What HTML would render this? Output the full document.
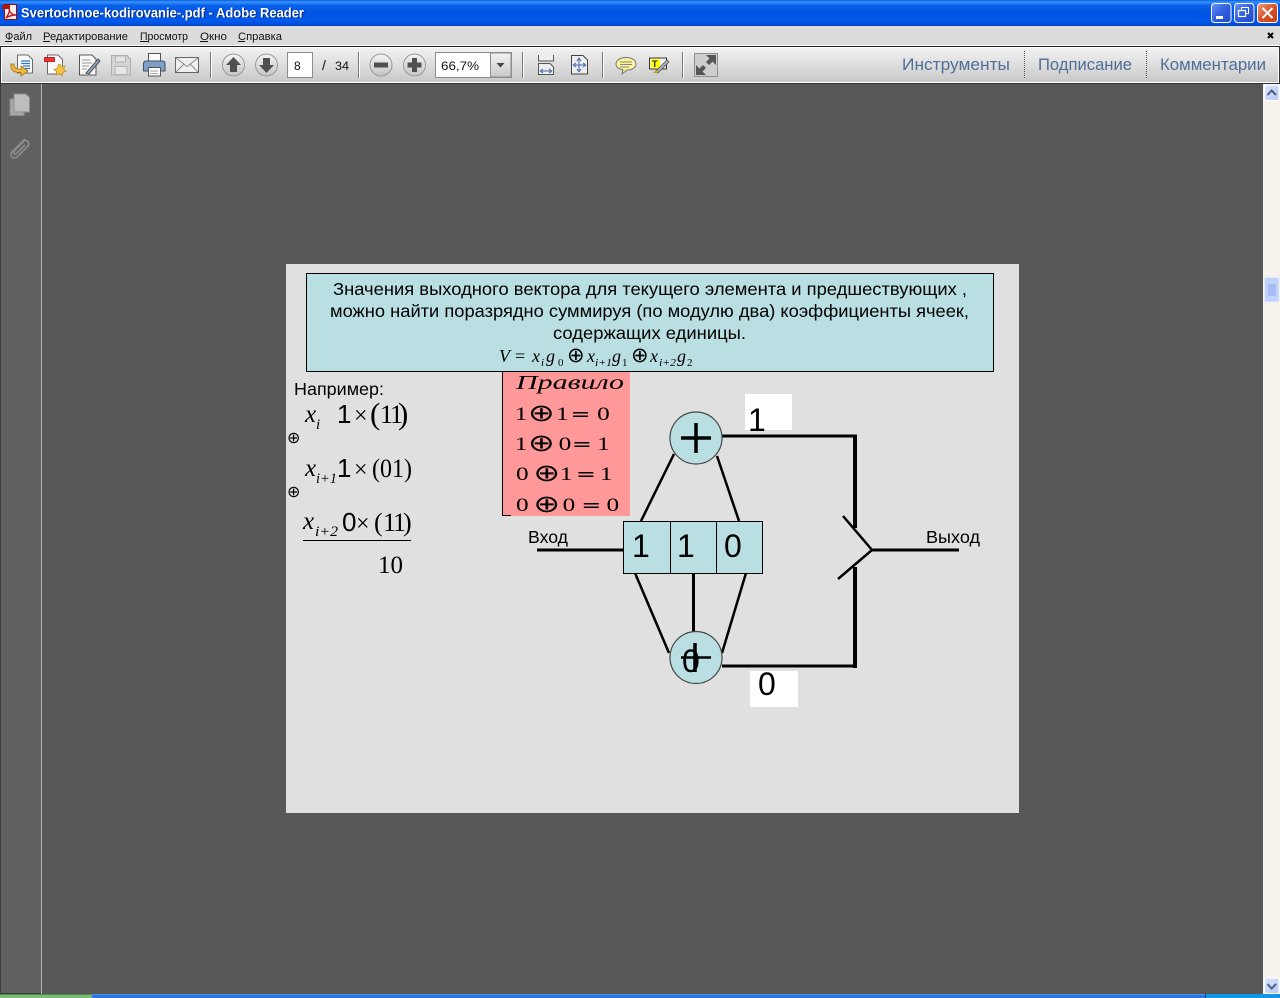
<!DOCTYPE html>
<html><head><meta charset="utf-8"><title>Svertochnoe-kodirovanie-.pdf - Adobe Reader</title>
<style>
html,body{margin:0;padding:0;background:#575757;width:1280px;height:998px;overflow:hidden}
svg{display:block;position:absolute;left:0;top:0}
text{font-family:"Liberation Sans",sans-serif;white-space:pre}
.s{font-family:"Liberation Serif",serif}
.i{font-family:"Liberation Serif",serif;font-style:italic}
.d{font-family:"DejaVu Sans",sans-serif}
</style></head><body>
<svg width="1280" height="998" viewBox="0 0 1280 998" xmlns="http://www.w3.org/2000/svg">
<defs>
<linearGradient id="tb" x1="0" y1="0" x2="0" y2="1">
<stop offset="0" stop-color="#0a5fe0"/><stop offset=".08" stop-color="#3a93ff"/><stop offset=".2" stop-color="#0a62ec"/><stop offset=".5" stop-color="#0053e0"/><stop offset=".8" stop-color="#005aec"/><stop offset=".93" stop-color="#0050dc"/><stop offset="1" stop-color="#0040b8"/>
</linearGradient>
<linearGradient id="tool" x1="0" y1="0" x2="0" y2="1"><stop offset="0" stop-color="#f2f2f2"/><stop offset="1" stop-color="#c9c9c9"/></linearGradient>
<linearGradient id="btn" x1="0" y1="0" x2="1" y2="1"><stop offset="0" stop-color="#6f92f0"/><stop offset=".5" stop-color="#2f5fe0"/><stop offset="1" stop-color="#2246c4"/></linearGradient>
<linearGradient id="cls" x1="0" y1="0" x2="1" y2="1"><stop offset="0" stop-color="#ec9a7c"/><stop offset=".5" stop-color="#d8532b"/><stop offset="1" stop-color="#c23a12"/></linearGradient>
<linearGradient id="sb" x1="0" y1="0" x2="1" y2="1"><stop offset="0" stop-color="#dfe8fd"/><stop offset="1" stop-color="#b4c6f5"/></linearGradient>
<linearGradient id="circ" x1="0" y1="0" x2="0" y2="1"><stop offset="0" stop-color="#f4f4f4"/><stop offset="1" stop-color="#c4c4c4"/></linearGradient>
</defs>

<!-- background -->
<rect x="0" y="0" width="1280" height="998" fill="#575757"/>

<!-- title bar -->
<rect x="0" y="0" width="1280" height="26" fill="url(#tb)"/>
<rect x="4.500" y="4.500" width="12" height="15" fill="#f4eeee" stroke="#8a1010" stroke-width="1"/>
<rect x="2" y="5" width="8" height="4" fill="#b01414"/>
<path d="M6 18C9 14 10 11 9 8C9 12 12 15 16 15C12 15 9 16 6 18Z" fill="none" stroke="#c01818" stroke-width="1.400"/>
<text x="22" y="18" font-size="14" font-weight="700" fill="#04237a" textLength="283" lengthAdjust="spacingAndGlyphs">Svertochnoe-kodirovanie-.pdf - Adobe Reader</text>
<text x="21" y="17.500" font-size="14" font-weight="700" fill="#ffffff" textLength="283" lengthAdjust="spacingAndGlyphs">Svertochnoe-kodirovanie-.pdf - Adobe Reader</text>

<!-- window buttons -->
<rect x="1211.500" y="3.500" width="19.500" height="19" rx="3" fill="url(#btn)" stroke="#fff"/>
<rect x="1216" y="16" width="7" height="3" fill="#fff"/>
<rect x="1234.500" y="3.500" width="19.500" height="19" rx="3" fill="url(#btn)" stroke="#fff"/>
<path d="M1241.500 9.500V7.500H1248.500V13.500H1246" fill="none" stroke="#fff"/>
<rect x="1238.500" y="10.500" width="7" height="6" fill="none" stroke="#fff" stroke-width="1.200"/>
<rect x="1257.500" y="3.500" width="20" height="19" rx="3" fill="url(#cls)" stroke="#fff"/>
<path d="M1262.500 8L1272.500 18M1272.500 8L1262.500 18" stroke="#fff" stroke-width="2"/>

<!-- menu bar -->
<rect x="0" y="26" width="1280" height="19" fill="#dcdcdc"/>
<g font-size="11" fill="#111">
<text x="5" y="40" textLength="27" lengthAdjust="spacingAndGlyphs">Файл</text>
<text x="43" y="40" textLength="85" lengthAdjust="spacingAndGlyphs">Редактирование</text>
<text x="140" y="40" textLength="48" lengthAdjust="spacingAndGlyphs">Просмотр</text>
<text x="200" y="40" textLength="27" lengthAdjust="spacingAndGlyphs">Окно</text>
<text x="238" y="40" textLength="44" lengthAdjust="spacingAndGlyphs">Справка</text>
</g>
<g fill="#111"><rect x="5" y="41" width="7" height="1"/><rect x="43" y="41" width="7" height="1"/><rect x="140" y="41" width="8" height="1"/><rect x="200" y="41" width="8" height="1"/><rect x="238" y="41" width="7" height="1"/></g>
<path d="M1268 33L1273 38M1273 33L1268 38" stroke="#000" stroke-width="2"/>

<!-- toolbar -->
<rect x="0" y="45" width="1280" height="1" fill="#fff"/>
<rect x="0" y="46" width="1280" height="1" fill="#222"/>
<rect x="0" y="47" width="1280" height="1" fill="#fff"/>
<rect x="1" y="48" width="1278" height="34" fill="url(#tool)"/>
<rect x="0" y="82" width="1280" height="1" fill="#fff"/>
<rect x="0" y="83" width="1280" height="1" fill="#333"/>
<rect x="0" y="46" width="1" height="37" fill="#333"/>
<rect x="1" y="47" width="1" height="35" fill="#fff"/>
<rect x="1278" y="47" width="1" height="35" fill="#fff"/>
<rect x="1279" y="46" width="1" height="37" fill="#333"/>

<!-- icon 1 open -->
<path d="M17.500 55H28L32.500 59.500V73H17.500Z" fill="#fbfbfb" stroke="#6b6b6b"/>
<path d="M21 61H30M21 63.500H30M23 66H30M25 68.500H30" stroke="#2f78c8" stroke-width="1.200"/>
<path d="M12 64C11 70 15 73 22 72.500V76L29 71L22 66V69C17 69.500 15 68 15 64Z" fill="#f2b73f" stroke="#a56f10" stroke-width=".8" transform="translate(-1 0)"/>
<!-- icon 2 create -->
<path d="M47.500 55H58L62.500 59.500V74H47.500Z" fill="#fbfbfb" stroke="#6b6b6b"/>
<rect x="44.500" y="57.500" width="10" height="4" fill="#e33" stroke="#a11" stroke-width=".8"/>
<path d="M60 64L61.500 67L65 66L63.500 69L66 71.500L63 72L62 76L59.500 73.500L56 75L56.500 71.500L54 69.500L57.500 68.500L58 65Z" fill="#f5c445" stroke="#b98a15" stroke-width=".7"/>
<!-- icon 3 edit -->
<path d="M79.500 55H92L96 59V75H79.500Z" fill="#f8f8f8" stroke="#555"/>
<path d="M82 60H90M82 63H92M82 66H89M82 69H87" stroke="#999"/>
<path d="M86 73L98 59L100 61L89 74Z" fill="#8ea2b5" stroke="#444" stroke-width=".9"/>
<!-- icon 4 save -->
<path d="M111.500 55.500H127L130.500 59V75H111.500Z" fill="#d4d4d4" stroke="#adadad"/>
<rect x="115.500" y="56" width="10" height="6" fill="#e5e5e5" stroke="#b5b5b5"/>
<rect x="115" y="66.500" width="12" height="8" fill="#e8e8e8" stroke="#b5b5b5"/>
<!-- icon 5 print -->
<rect x="148.500" y="53.500" width="12" height="8" fill="#fafafa" stroke="#555"/>
<path d="M146 61H163Q165 61 165 64V71H143.500V64Q143.500 61 146 61Z" fill="#7fa1c6" stroke="#39526f"/>
<rect x="148.500" y="67.500" width="12" height="8.500" fill="#fafafa" stroke="#555"/>
<path d="M150 71H158M150 73.500H158" stroke="#aaa"/>
<!-- icon 6 mail -->
<rect x="175.500" y="57.500" width="23" height="15" fill="#f0f0f0" stroke="#666"/>
<path d="M176 58L187 66.500L198 58M176 72L184 64M198 72L190 64" fill="none" stroke="#8a8a8a"/>

<g fill="#777">
<rect x="210" y="52" width="1" height="26"/><rect x="358" y="52" width="1" height="26"/><rect x="522" y="52" width="1" height="26"/><rect x="602" y="52" width="1" height="26"/><rect x="682" y="52" width="1" height="26"/>
</g>
<g fill="#fff">
<rect x="211" y="52" width="1" height="26"/><rect x="359" y="52" width="1" height="26"/><rect x="523" y="52" width="1" height="26"/><rect x="603" y="52" width="1" height="26"/><rect x="683" y="52" width="1" height="26"/>
</g>

<!-- nav -->
<g fill="url(#circ)" stroke="#9a9a9a">
<circle cx="233.500" cy="65" r="11"/><circle cx="266.500" cy="65" r="11"/><circle cx="381" cy="65" r="11"/><circle cx="414.500" cy="65" r="11"/>
</g>
<path d="M233.500 57L241 65H237V72H230V65H226Z" fill="#4f4f4f"/>
<path d="M266.500 73L259 65H263V58H270V65H274Z" fill="#4f4f4f"/>
<rect x="374" y="62.500" width="14" height="5" fill="#4f4f4f"/>
<path d="M412 58H417V62.500H421.500V67.500H417V72H412V67.500H407.500V62.500H412Z" fill="#4f4f4f"/>
<rect x="287.500" y="52.500" width="25" height="25" fill="#fff" stroke="#8c8c8c"/>
<text x="294" y="70" font-size="12" fill="#111">8</text>
<text x="322" y="70" font-size="14" fill="#111">/</text>
<text x="335" y="70" font-size="12" fill="#111" textLength="14" lengthAdjust="spacingAndGlyphs">34</text>
<rect x="435.500" y="52.500" width="76" height="25" fill="#fff" stroke="#8c8c8c"/>
<rect x="490.500" y="53" width="20.500" height="24" fill="url(#tool)" stroke="#8c8c8c"/>
<path d="M496.500 63H504.500L500.500 67.500Z" fill="#444"/>
<text x="441" y="70" font-size="12" fill="#111" textLength="38" lengthAdjust="spacingAndGlyphs">66,7%</text>

<!-- fit width -->
<path d="M538.500 55V61H553.500V55" fill="#eee" stroke="#555"/>
<path d="M538.500 74.500V63.500H550L553.500 67V74.500Z" fill="#eee" stroke="#555"/>
<path d="M540 71H552M540 71L543 69M540 71L543 73M552 71L549 69M552 71L549 73" stroke="#5c7db8" stroke-width="1.200" fill="none"/>
<!-- fit page -->
<path d="M571.500 55.500H583L587.500 60V74H571.500Z" fill="#eee" stroke="#444"/>
<path d="M579 58V72M573 65H586M579 58L577 61M579 58L581 61M579 72L577 69M579 72L581 69M573 65L576 63M573 65L576 67M586 65L583 63M586 65L583 67" stroke="#5c7db8" stroke-width="1.200" fill="none"/>
<!-- comment -->
<path d="M626 57.500C632 57.500 636 60.500 636 64C636 67.500 632 70 627 70L622 74L623 69.800C619 69 616 67 616 64C616 60.500 620 57.500 626 57.500Z" fill="#fbf59a" stroke="#777"/>
<path d="M620 62H632M620 64.500H632M620 67H629" stroke="#888"/>
<!-- highlight -->
<rect x="649.500" y="58" width="17" height="11" fill="#f2f2f2" stroke="#333"/>
<rect x="651" y="59" width="9" height="9" fill="#ff0"/>
<text x="652" y="67" font-size="9" font-weight="700" fill="#222">T</text>
<path d="M655 72L667 60L669 62L658 73Z" fill="#aab2bc" stroke="#555" stroke-width=".8"/>
<path d="M654 72.500L656 70L658 72.500Z" fill="#eec93f" stroke="#b98a15" stroke-width=".7"/>
<!-- fullscreen -->
<rect x="694.500" y="53.500" width="23" height="23" fill="#cdcdcd" stroke="#909090"/>
<path d="M706 55H716V65L712.500 61.500L709 65L706 62L709.500 58.500Z" fill="#555"/>
<path d="M706 75H696V65L699.500 68.500L703 65L706 68L702.500 71.500Z" fill="#555"/>

<!-- right tools -->
<g font-size="16.500" fill="#4f6f97">
<text x="902" y="70" textLength="108" lengthAdjust="spacingAndGlyphs">Инструменты</text>
<text x="1038" y="70" textLength="94" lengthAdjust="spacingAndGlyphs">Подписание</text>
<text x="1160" y="70" textLength="106" lengthAdjust="spacingAndGlyphs">Комментарии</text>
</g>
<path d="M1024.500 51V78M1146.500 51V78" stroke="#555" stroke-dasharray="1 1"/>

<!-- left panel -->
<rect x="0" y="84" width="41" height="909" fill="#606060"/>
<rect x="0" y="84" width="1" height="909" fill="#3c3c3c"/>
<rect x="41" y="84" width="1" height="910" fill="#b5b5b5"/>
<rect x="0" y="993" width="41" height="1" fill="#3c3c3c"/>
<path d="M10 99H24V115.500H10Z" fill="#a8a8a8" stroke="#8b8b8b"/>
<path d="M14 94H26L29.500 97.500V112H14Z" fill="#bdbdbd" stroke="#8f8f8f"/>
<path d="M25 139L12 152C9 156 13 160 17 157L28 146C30 143 27 139 24 141L14 151C12.500 153 15 155 17 153L25 145" fill="none" stroke="#8f8f8f" stroke-width="1.500"/>

<!-- scrollbar -->
<rect x="1263" y="84" width="17" height="910" fill="#f5f3ec"/>
<rect x="1264.500" y="85" width="14.500" height="15.500" rx="1.500" fill="url(#sb)" stroke="#fff"/>
<path d="M1267.500 95L1271.700 90.500L1276 95" fill="none" stroke="#4d6185" stroke-width="2"/>
<rect x="1264.500" y="277.500" width="14.500" height="24.500" rx="1.500" fill="#c2d1f9" stroke="#e6ecfd"/>
<path d="M1268 285H1276M1268 287H1276M1268 289H1276M1268 291H1276M1268 293H1276M1268 295H1276" stroke="#8ba9f0"/>
<rect x="1264.500" y="978" width="14.500" height="15.500" rx="1.500" fill="url(#sb)" stroke="#fff"/>
<path d="M1267.500 984L1271.700 988.500L1276 984" fill="none" stroke="#4d6185" stroke-width="2"/>

<!-- taskbar -->
<rect x="0" y="994" width="1280" height="4" fill="#2f74e0"/>
<rect x="0" y="994" width="1280" height="1" fill="#4d90ee"/>
<rect x="0" y="994" width="92" height="4" fill="#7fb77f"/>
<rect x="0" y="994" width="92" height="1" fill="#3f8f3f"/>
<rect x="1205" y="994" width="75" height="4" fill="#1296e6"/>
<rect x="1205" y="994" width="1" height="4" fill="#0b3f96"/>

<!-- PAGE -->
<rect x="286" y="264" width="733" height="549" fill="#e0e0e0"/>
<rect x="306.500" y="273.500" width="687" height="98" fill="#b9dfe2" stroke="#000"/>
<g font-size="17.500" fill="#000">
<text x="333" y="295" textLength="634" lengthAdjust="spacingAndGlyphs">Значения выходного вектора для текущего элемента и предшествующих ,</text>
<text x="330" y="317" textLength="639" lengthAdjust="spacingAndGlyphs">можно найти поразрядно суммируя (по модулю два) коэффициенты ячеек,</text>
<text x="553" y="339" textLength="193" lengthAdjust="spacingAndGlyphs">содержащих единицы.</text>
</g>

<!-- top formula -->
<g fill="#000">
<text class="i" x="499" y="362" font-size="18">V</text>
<text class="s" x="515" y="362" font-size="18">=</text>
<text class="i" x="532" y="362" font-size="18">x</text>
<text class="i" x="541" y="366" font-size="11">i</text>
<text class="i" x="546" y="362" font-size="18">g</text>
<text class="s" x="558" y="366" font-size="11">0</text>
<text class="d" x="567" y="362" font-size="21">⊕</text>
<text class="i" x="587" y="362" font-size="18">x</text>
<text class="i" x="595" y="366" font-size="11" textLength="17" lengthAdjust="spacingAndGlyphs">i+1</text>
<text class="i" x="612" y="362" font-size="18">g</text>
<text class="s" x="622" y="366" font-size="11">1</text>
<text class="d" x="631" y="362" font-size="21">⊕</text>
<text class="i" x="650" y="362" font-size="18">x</text>
<text class="i" x="659" y="366" font-size="11" textLength="17" lengthAdjust="spacingAndGlyphs">i+2</text>
<text class="i" x="677" y="362" font-size="18">g</text>
<text class="s" x="687" y="366" font-size="11">2</text>
</g>

<!-- rule box -->
<rect x="503" y="372" width="127" height="144" fill="#ff9999"/>
<rect x="502" y="372" width="1" height="144" fill="#000"/>
<rect x="502" y="515" width="9" height="1" fill="#000"/>
<g fill="#000">
<text class="i" x="516" y="389" font-size="19.500" textLength="108" lengthAdjust="spacingAndGlyphs">Правило</text>
<g font-size="19" transform="scale(1.33 1)">
<text class="s" x="387 418 449" y="420">110</text>
<text class="s" x="387 420 449" y="450">101</text>
<text class="s" x="388 421 451" y="480">011</text>
<text class="s" x="388 423 456" y="511">000</text>
</g>
<g font-size="24" transform="scale(1.33 1)">
<text class="d" x="397" y="421">⊕</text>
<text class="d" x="397" y="451">⊕</text>
<text class="d" x="401" y="481">⊕</text>
<text class="d" x="401" y="512">⊕</text>
</g>
<g font-size="18" transform="scale(1.33 1)">
<text class="d" x="429" y="420">=</text>
<text class="d" x="430" y="450">=</text>
<text class="d" x="433" y="480">=</text>
<text class="d" x="437" y="511">=</text>
</g>
</g>

<!-- left formulas -->
<g fill="#000">
<text x="294" y="395" font-size="17.500" textLength="90" lengthAdjust="spacingAndGlyphs">Например:</text>
<text class="i" x="305" y="422" font-size="25">x</text>
<text class="i" x="316" y="429" font-size="15">i</text>
<text x="337" y="423" font-size="26">1</text>
<text class="s" x="354" y="423" font-size="24">×</text>
<text class="s" x="370" y="424" font-size="31">(</text>
<text class="s" x="380 390" y="423" font-size="26">11</text>
<text class="s" x="398" y="424" font-size="31">)</text>
<text class="d" x="287" y="443" font-size="16">⊕</text>

<text class="i" x="305" y="476" font-size="25">x</text>
<text class="i" x="316" y="483" font-size="15" textLength="21" lengthAdjust="spacingAndGlyphs">i+1</text>
<text x="337" y="477" font-size="26">1</text>
<text class="s" x="354" y="477" font-size="24">×</text>
<text class="s" x="372" y="477" font-size="26" textLength="40" lengthAdjust="spacingAndGlyphs">(01)</text>
<text class="d" x="287" y="497" font-size="16">⊕</text>

<text class="i" x="303" y="529" font-size="25">x</text>
<text class="i" x="315" y="536" font-size="15" textLength="23" lengthAdjust="spacingAndGlyphs">i+2</text>
<text x="342" y="531" font-size="26">0</text>
<text class="s" x="356" y="531" font-size="24">×</text>
<text class="s" x="374 383 393 403" y="531" font-size="26">(11)</text>
<rect x="303" y="540" width="108" height="1"/>
<text class="s" x="378" y="573" font-size="25">10</text>
</g>

<!-- diagram -->
<g stroke="#000" fill="none" stroke-width="2.500">
<path d="M641 521L674 454"/>
<path d="M739 521L717 456"/>
<path d="M635 573L669 653"/>
<path d="M746 573L722 653"/>
<path d="M693.500 573V633" stroke-width="3"/>
<path d="M537 550H624" stroke-width="3"/>
<path d="M722 436H857" stroke-width="3"/>
<path d="M855 435V528" stroke-width="4"/>
<path d="M855 567V668" stroke-width="4"/>
<path d="M722 666H857" stroke-width="3"/>
<path d="M843 516L872 550L838 579"/>
<path d="M872 550H959" stroke-width="3"/>
</g>
<rect x="623.500" y="521.500" width="139" height="52" fill="#b9dfe2" stroke="#000"/>
<path d="M670.500 521.500V573.500M716.500 521.500V573.500" stroke="#000"/>
<circle cx="696" cy="438" r="26" fill="#b9dfe2" stroke="#444" stroke-width="1.200"/>
<circle cx="696" cy="657.500" r="26" fill="#b9dfe2" stroke="#444" stroke-width="1.200"/>
<path d="M681 438H711M696 423V453" stroke="#000" stroke-width="3.500"/>
<path d="M681 657.500H711" stroke="#000" stroke-width="2.500"/>
<path d="M695 643V672" stroke="#000" stroke-width="3.500"/>
<text x="682" y="672" font-size="32" fill="#000">0</text>
<g font-size="32" fill="#000">
<text x="632" y="557">1</text>
<text x="677" y="557">1</text>
<text x="724" y="557">0</text>
</g>
<rect x="745" y="394" width="47" height="36" fill="#fff"/>
<rect x="750" y="671" width="48" height="36" fill="#fff"/>
<text x="748" y="431" font-size="32" fill="#000">1</text>
<text x="758" y="695" font-size="32" fill="#000">0</text>
<text x="528" y="543" font-size="17.500" fill="#000" textLength="40" lengthAdjust="spacingAndGlyphs">Вход</text>
<text x="926" y="543" font-size="17.500" fill="#000" textLength="54" lengthAdjust="spacingAndGlyphs">Выход</text>
</svg>
</body></html>
